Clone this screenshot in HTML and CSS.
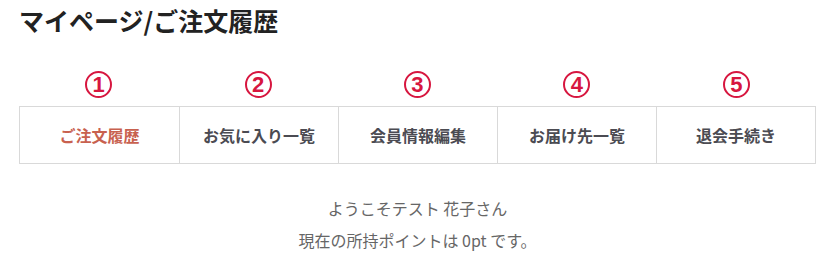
FILE: index.html
```html
<!DOCTYPE html>
<html lang="ja">
<head>
<meta charset="utf-8">
<link rel="stylesheet" href="styles.css">
</head>
<body>
<div class="page">
  <h1 class="title">マイページ/ご注文履歴</h1>
  <div class="nums">
    <div class="cell"><span class="num">1</span></div>
    <div class="cell"><span class="num">2</span></div>
    <div class="cell"><span class="num">3</span></div>
    <div class="cell"><span class="num">4</span></div>
    <div class="cell"><span class="num">5</span></div>
  </div>
  <ul class="tabs">
    <li class="tab active">ご注文履歴</li>
    <li class="tab">お気に入り一覧</li>
    <li class="tab">会員情報編集</li>
    <li class="tab">お届け先一覧</li>
    <li class="tab">退会手続き</li>
  </ul>
  <div class="welcome">
    <p>ようこそテスト 花子さん</p>
    <p>現在の所持ポイントは 0pt です。</p>
  </div>
</div>
</body>
</html>
```

FILE: styles.css
```css
html, body {
  margin: 0;
  padding: 0;
  background: #fff;
}
body {
  font-family: "Noto Sans CJK JP", "Noto Sans", sans-serif;
}
.page {
  width: 797px;
  padding: 0 14px 0 19px;
}
.title {
  margin: 0;
  padding-top: 4px;
  font-size: 25px;
  line-height: 32px;
  font-weight: 700;
  color: #222;
}
.nums {
  display: grid;
  grid-template-columns: repeat(5, 1fr);
  margin-top: 35px;
  height: 35px;
}
.cell {
  display: flex;
  justify-content: center;
}
.num {
  box-sizing: border-box;
  width: 27px;
  height: 27px;
  border: 2px solid #d7163f;
  border-radius: 50%;
  display: flex;
  align-items: center;
  justify-content: center;
  color: #d7163f;
  font-family: "Liberation Sans", Arial, sans-serif;
  font-size: 22px;
  font-weight: 700;
  line-height: 1;
}
.tabs {
  list-style: none;
  margin: 0;
  padding: 0;
  display: grid;
  grid-template-columns: repeat(5, 1fr);
  border: 1px solid #d9d9d9;
  height: 58px;
  box-sizing: border-box;
}
.tab {
  display: flex;
  align-items: center;
  justify-content: center;
  font-size: 16px;
  font-weight: 700;
  color: #4b4b52;
  border-left: 1px solid #d9d9d9;
}
.tab:first-child {
  border-left: none;
}
.tab.active {
  color: #c8614f;
}
.welcome {
  margin-top: 28px;
  text-align: center;
  color: #666;
  font-size: 16px;
  line-height: 32px;
}
.welcome p {
  margin: 0;
}
```
